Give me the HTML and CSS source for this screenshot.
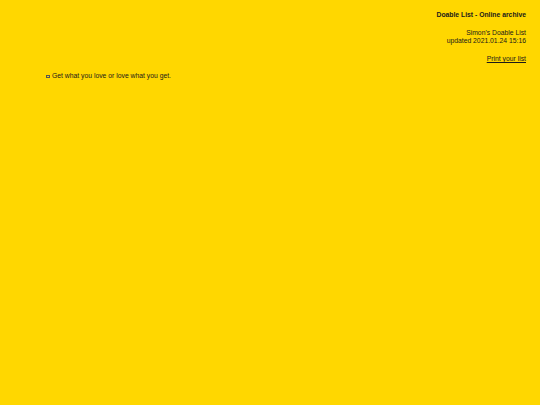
FILE: index.html
```html
<!DOCTYPE html>
<html>
<head>
<meta charset="utf-8">
<link rel="stylesheet" href="styles.css">
</head>
<body>
<div class="header">
  <div class="title">Doable List - Online archive</div>
  <div class="meta">Simon's Doable List<br>updated 2021.01.24 15:16</div>
  <div class="print"><a href="#">Print your list</a></div>
</div>
<ul class="list">
  <li><span class="box"></span>Get what you love or love what you get.</li>
</ul>
</body>
</html>
```
FILE: styles.css
```css
html, body {
  margin: 0;
  padding: 0;
  background: #FFD700;
}
body {
  font-family: "Liberation Sans", Arial, sans-serif;
  font-size: 6.8px;
  line-height: 8px;
  color: #1a1a1a;
}
.header {
  text-align: right;
  padding: 11px 14px 0 0;
}
.title {
  font-weight: bold;
}
.meta {
  margin-top: 10px;
}
.print {
  margin-top: 10px;
}
.print a {
  color: #1a1a1a;
  text-decoration: underline;
}
.list {
  list-style: none;
  margin: 9px 0 0 46px;
  padding: 0;
}
.list li {
  display: flex;
  align-items: center;
}
.box {
  box-sizing: border-box;
  width: 3.5px;
  height: 3.5px;
  border: 0.5px solid #555;
  margin-right: 2.5px;
  margin-top: 1px;
}
```
